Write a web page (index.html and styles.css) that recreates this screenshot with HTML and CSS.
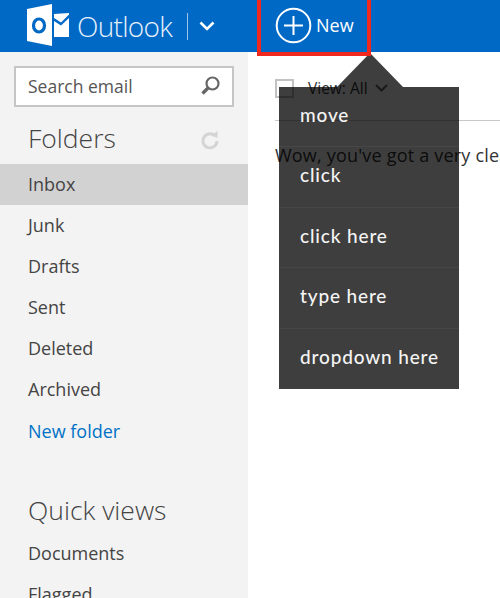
FILE: index.html
```html
<!DOCTYPE html>
<html lang="en">
<head>
    <meta charset="UTF-8">
    <meta name="viewport" content="width=device-width, initial-scale=1.0">
    <title>Outlook</title>
    <link rel="stylesheet" href="styles.css">
</head>
<body>

<header class="topbar">
    <div class="brand">
        <svg class="brand-logo" width="42" height="42" viewBox="0 0 42 42">
            <path d="M0 5 L25 0 V42 L0 37 Z" fill="#fff"/>
            <ellipse cx="12" cy="21.500" rx="5.500" ry="6.500" fill="none" stroke="#0069c6" stroke-width="3.200"/>
            <path d="M27 10 L42 9 V10.500 L34 18.500 L27 14 Z" fill="#fff"/>
            <path d="M27 17 L34 21.500 L42 14 V33 H27 Z" fill="#fff"/>
        </svg>
        <span class="brand-name">Outlook</span>
        <span class="brand-divider"></span>
        <svg class="brand-caret" width="16" height="10" viewBox="0 0 16 10">
            <path d="M1.500 1.500 L8 8 L14.500 1.500" fill="none" stroke="#fff" stroke-width="2.600"/>
        </svg>
    </div>
    <div class="new-button">
        <svg width="37" height="37" viewBox="0 0 37 37">
            <circle cx="18.500" cy="18.500" r="16.800" fill="none" stroke="#fff" stroke-width="2"/>
            <path d="M18.500 9 V28 M9 18.500 H28" fill="none" stroke="#fff" stroke-width="2"/>
        </svg>
        <span>New</span>
    </div>
</header>

<div class="layout">
    <aside class="sidebar">
        <div class="search">
            <span>Search email</span>
            <svg width="21" height="21" viewBox="0 0 21 21">
                <circle cx="12.500" cy="8.500" r="6" fill="none" stroke="#666" stroke-width="2.200"/>
                <path d="M8 13 L2.500 18.500" fill="none" stroke="#666" stroke-width="3.400"/>
            </svg>
        </div>

        <div class="section-head">
            <h2>Folders</h2>
            <svg class="refresh" width="20" height="20" viewBox="0 0 20 20">
                <path d="M14.500 5.500 A7 7 0 1 0 17 11" fill="none" stroke="#d4d4d4" stroke-width="3"/>
                <path d="M11.500 5.500 L17.500 1 V8 Z" fill="#d4d4d4"/>
            </svg>
        </div>
        <ul class="folders">
            <li class="active">Inbox</li>
            <li>Junk</li>
            <li>Drafts</li>
            <li>Sent</li>
            <li>Deleted</li>
            <li>Archived</li>
            <li class="link">New folder</li>
        </ul>

        <div class="section-head quick">
            <h2>Quick views</h2>
        </div>
        <ul class="folders">
            <li>Documents</li>
            <li>Flagged</li>
        </ul>
    </aside>

    <main class="content">
        <div class="toolbar">
            <span class="checkbox"></span>
            <span class="view">View: All</span>
            <svg width="13" height="8" viewBox="0 0 13 8">
                <path d="M1 1 L6.500 6.500 L12 1" fill="none" stroke="#666" stroke-width="2"/>
            </svg>
        </div>
        <p class="empty">Wow, you've got a very clean inbox!</p>
    </main>
</div>

<div class="popup">
    <div class="popup-arrow"></div>
    <ul class="popup-list">
        <li>move</li>
        <li>click</li>
        <li>click here</li>
        <li>type here</li>
        <li>dropdown here</li>
    </ul>
</div>

</body>
</html>
```

FILE: styles.css
```css
html, body {
    height: 100%;
}
body {
    margin: 0;
    overflow: hidden;
    font-family: "Open Sans", "Noto Sans", sans-serif;
    color: #444;
    background-color: #fff;
}
ul {
    list-style: none;
    margin: 0;
    padding: 0;
}
.topbar {
    display: flex;
    align-items: flex-start;
    height: 52px;
    background-color: #0069c6;
    color: #fff;
}
.brand {
    display: flex;
    align-items: center;
    width: 257px;
    height: 52px;
    padding-left: 27px;
    box-sizing: border-box;
}
.brand-logo {
    margin-top: -2px;
    margin-right: 8px;
}
.brand-name {
    font-size: 28px;
    font-weight: 300;
    letter-spacing: -0.7px;
    color: #e6f0fa;
}
.brand-divider {
    width: 1px;
    height: 27px;
    margin: 0 11px 0 15px;
    background-color: #9cc4e8;
}
.new-button {
    display: flex;
    align-items: center;
    gap: 4px;
    position: relative;
    z-index: 1;
    width: 114px;
    height: 56px;
    padding-left: 14px;
    padding-bottom: 2px;
    box-sizing: border-box;
    border: 4px solid #f0281e;
    border-top: none;
    font-size: 18px;
}
.layout {
    display: flex;
    height: 546px;
    overflow: hidden;
}
.sidebar {
    width: 248px;
    flex-shrink: 0;
    background-color: #f3f3f3;
    font-size: 18px;
}
.search {
    display: flex;
    align-items: center;
    justify-content: space-between;
    height: 41px;
    margin: 14px 14px 0 14px;
    padding: 0 11px 2px 12px;
    box-sizing: border-box;
    border: 2px solid #c6c6c6;
    background-color: #fff;
    color: #555;
    font-size: 17.500px;
}
.section-head {
    display: flex;
    align-items: center;
    justify-content: space-between;
    height: 57px;
    padding: 4px 28px 0;
    box-sizing: border-box;
}
.section-head h2 {
    margin: 0;
    font-size: 26.500px;
    font-weight: 300;
    color: #444;
}
.refresh {
    margin-top: 5px;
}
.quick {
    height: 53px;
    margin-top: 29px;
    padding-top: 6px;
}
.folders li {
    height: 41px;
    line-height: 41px;
    padding-left: 28px;
}
.folders .active {
    background-color: #d2d2d2;
}
.folders .link {
    line-height: 43px;
    color: #0072c6;
}
.content {
    flex: 1;
    min-width: 0;
    padding-left: 27px;
    white-space: nowrap;
    overflow: hidden;
}
.toolbar {
    display: flex;
    align-items: center;
    height: 69px;
    padding-top: 4px;
    border-bottom: 1px solid #c8c8c8;
    box-sizing: border-box;
    font-size: 15.500px;
    color: #333;
}
.checkbox {
    width: 15px;
    height: 15px;
    margin-right: 14px;
    border: 2px solid #c2c2c2;
}
.view {
    margin-right: 7px;
}
.empty {
    margin: 22px 0 0;
    font-size: 18px;
    letter-spacing: 0.2px;
    color: #333;
}
.popup {
    position: absolute;
    left: 279px;
    top: 87px;
    width: 180px;
}
.popup-arrow {
    position: absolute;
    left: 58px;
    top: -34px;
    width: 0;
    height: 0;
    border-left: 33px solid transparent;
    border-right: 33px solid transparent;
    border-bottom: 34px solid rgba(0, 0, 0, 0.757);
}
.popup-list {
    background-color: rgba(0, 0, 0, 0.757);
    color: #f4f4f4;
    font-family: Lato, sans-serif;
    font-size: 19px;
    font-weight: 500;
    letter-spacing: 0.850px;
}
.popup-list li {
    height: 60.400px;
    line-height: 55px;
    padding-left: 21px;
    box-sizing: border-box;
    border-bottom: 1px solid #474747;
}
.popup-list li:last-child {
    border-bottom: none;
}
```
